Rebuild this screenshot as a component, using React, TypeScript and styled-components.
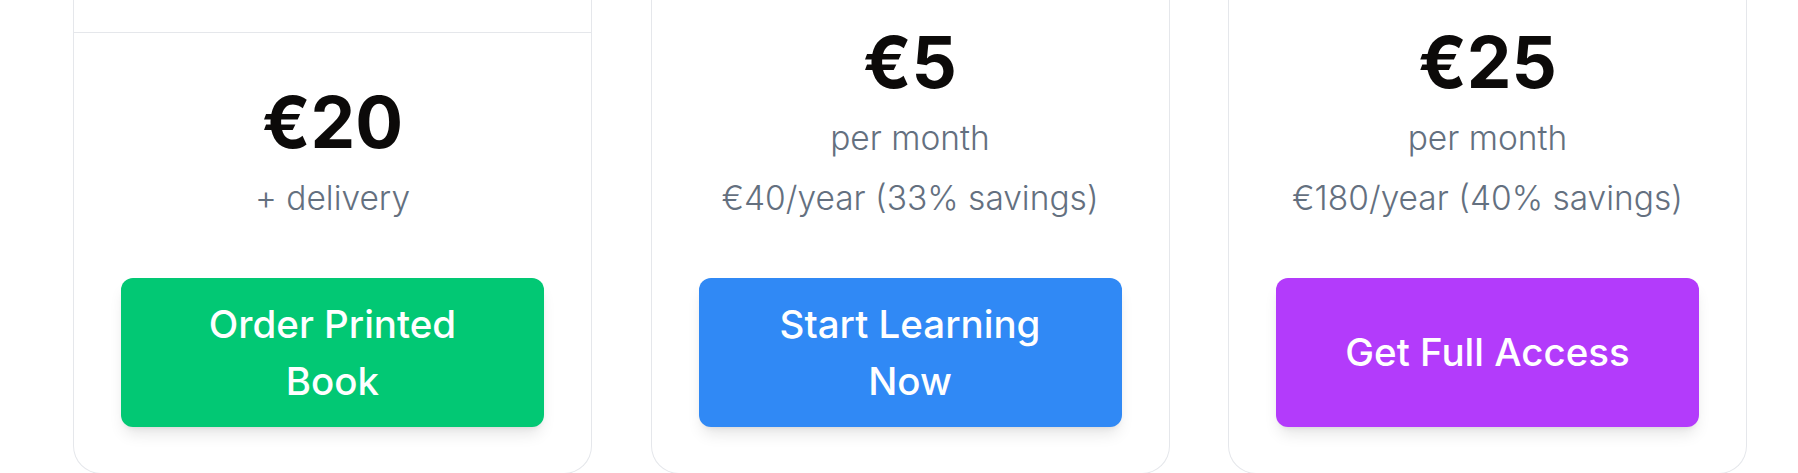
import styled, { createGlobalStyle } from "styled-components"

const GlobalStyle = createGlobalStyle`
    html, body {
        margin: 0;
        padding: 0;
        background: #ffffff;
        font-family: Inter, "Noto Sans", sans-serif;
        -webkit-font-smoothing: antialiased;
    }
    * {
        box-sizing: border-box;
    }
`

const Page = styled.div`
    height: 473px;
    overflow: hidden;
    padding-left: 73px;
`

const Grid = styled.div`
    display: grid;
    grid-template-columns: repeat(3, 519px);
    column-gap: 58.5px;
    align-items: stretch;
`

const Card = styled.div`
    display: flex;
    flex-direction: column;
    background: #ffffff;
    border: 1px solid #e5e7eb;
    border-top: none;
    border-radius: 0 0 28px 28px;
`

const CardHeader = styled.div`
    height: 33px;
    border-bottom: 1px solid #e5e7eb;
`

const Body = styled.div`
    flex: 1;
    display: flex;
    flex-direction: column;
    justify-content: flex-end;
    align-items: center;
    padding: 26px 47px 46px;
    text-align: center;
`

const Price = styled.div`
    font-size: 71px;
    line-height: 72px;
    font-weight: 700;
    color: #0c0a09;
    margin-bottom: 4px;
`

const Sub = styled.div`
    font-size: 33.5px;
    line-height: 48px;
    font-weight: 300;
    color: #64707f;
    margin-top: 12px;
`

const Button = styled.button<{ $bg: string }>`
    margin-top: 56px;
    width: 100%;
    min-height: 149px;
    display: flex;
    align-items: center;
    justify-content: center;
    padding: 17px 48px;
    border: none;
    border-radius: 12px;
    background: ${(p) => p.$bg};
    color: #ffffff;
    font-family: Inter, "Noto Sans", sans-serif;
    font-size: 38.5px;
    line-height: 57px;
    font-weight: 500;
    text-align: center;
    cursor: pointer;
    box-shadow: 0 10px 15px -3px rgba(0, 0, 0, 0.1), 0 4px 6px -4px rgba(0, 0, 0, 0.1);
    &:hover {
        opacity: 0.9;
    }
`

type Plan = {
    price: string
    lines: string[]
    cta: string
    color: string
    header?: boolean
}

const plans: Plan[] = [
    { price: "€20", lines: ["+ delivery"], cta: "Order Printed Book", color: "#02c874", header: true },
    { price: "€5", lines: ["per month", "€40/year (33% savings)"], cta: "Start Learning Now", color: "#3089f5" },
    { price: "€25", lines: ["per month", "€180/year (40% savings)"], cta: "Get Full Access", color: "#b33bfb" },
]

export default function App() {
    return (
        <>
            <GlobalStyle />
            <Page>
                <Grid>
                    {plans.map((plan) => (
                        <Card key={plan.cta}>
                            {plan.header ? <CardHeader /> : null}
                            <Body>
                                <Price>{plan.price}</Price>
                                {plan.lines.map((line) => (
                                    <Sub key={line}>{line}</Sub>
                                ))}
                                <Button $bg={plan.color}>{plan.cta}</Button>
                            </Body>
                        </Card>
                    ))}
                </Grid>
            </Page>
        </>
    )
}
